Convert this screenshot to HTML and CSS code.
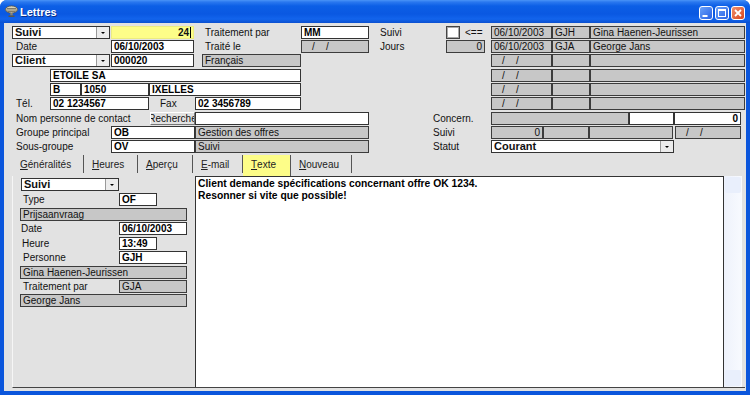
FILE: index.html
```html
<!DOCTYPE html>
<html lang="fr">
<head>
  <meta charset="UTF-8">
  <title>Lettres</title>
  <link rel="stylesheet" href="styles.css">
</head>
<body>
<div class="window">
  <!-- Barre de titre -->
  <div class="titlebar">
    <svg class="app-icon" width="13" height="13" viewBox="0 0 13 13">
      <ellipse cx="6.5" cy="4.5" rx="6" ry="3.6" fill="#d8d2b8" stroke="#5a5648" stroke-width="0.8"/>
      <path d="M2 3.5h9M1.2 5h10.6M2.4 6.5h8.2" stroke="#5a5648" stroke-width="0.7"/>
      <path d="M5.3 8h2.4v2.5H5.3z" fill="#8c8670"/>
      <path d="M3.5 10.5h6v1.5h-6z" fill="#5a5648"/>
    </svg>
    <span class="title">Lettres</span>
    <div class="win-buttons">
      <span class="wbtn"><svg width="12" height="12" viewBox="0 0 12 12"><rect x="2.5" y="8" width="5" height="2" fill="#fff"/></svg></span>
      <span class="wbtn"><svg width="12" height="12" viewBox="0 0 12 12"><rect x="2.5" y="2.5" width="7" height="7" fill="none" stroke="#fff" stroke-width="1"/><rect x="2" y="2" width="8" height="2" fill="#fff"/></svg></span>
      <span class="wbtn close"><svg width="12" height="12" viewBox="0 0 12 12"><path d="M3 3l6 6M9 3l-6 6" stroke="#fff" stroke-width="1.8"/></svg></span>
    </div>
  </div>

  <div class="frame">
    <!-- Entête du document -->
    <div class="head">
      <div class="row">
        <div class="combo w98"><span class="txt">Suivi</span><span class="drop"></span></div>
        <div class="f fy w83 r ml1">24<span class="caret"></span></div>
        <div class="lbl w107 pl11">Traitement par</div>
        <div class="f fw w68">MM</div>
        <div class="lbl w77 pl11">Suivi</div>
        <div class="w15"><span class="chk"></span></div>
        <div class="lbl w30 pl4">&lt;==</div>
        <div class="f fg w61">06/10/2003</div>
        <div class="f fg w38">GJH</div>
        <div class="f fg w155">Gina Haenen-Jeurissen</div>
      </div>
      <div class="row">
        <div class="lbl w99 pl4">Date</div>
        <div class="f fw w83">06/10/2003</div>
        <div class="lbl w107 pl11">Traité le</div>
        <div class="f fg w68 dt">/&nbsp;&nbsp;&nbsp;&nbsp;/</div>
        <div class="lbl w77 pl11">Jours</div>
        <div class="f fg w39 r">0</div>
        <div class="w6"></div>
        <div class="f fg w61">06/10/2003</div>
        <div class="f fg w38">GJA</div>
        <div class="f fg w155">George Jans</div>
      </div>
      <div class="row h15">
        <div class="combo w98"><span class="txt">Client</span><span class="drop"></span></div>
        <div class="f fw w83 ml1">000020</div>
        <div class="w8"></div>
        <div class="f fg w99">Français</div>
        <div class="w190"></div>
        <div class="f fg w61 dt">/&nbsp;&nbsp;&nbsp;&nbsp;/</div>
        <div class="f fg w38"></div>
        <div class="f fg w155"></div>
      </div>
      <div class="row">
        <div class="w38"></div>
        <div class="f fw w251">ETOILE SA</div>
        <div class="w190"></div>
        <div class="f fg w61 dt">/&nbsp;&nbsp;&nbsp;&nbsp;/</div>
        <div class="f fg w38"></div>
        <div class="f fg w155"></div>
      </div>
      <div class="row">
        <div class="w38"></div>
        <div class="f fw w31">B</div>
        <div class="f fw w68">1050</div>
        <div class="f fw w152">IXELLES</div>
        <div class="w190"></div>
        <div class="f fg w61 dt">/&nbsp;&nbsp;&nbsp;&nbsp;/</div>
        <div class="f fg w38"></div>
        <div class="f fg w155"></div>
      </div>
      <div class="row h15">
        <div class="lbl w38 pl4">Tél.</div>
        <div class="f fw w99">02 1234567</div>
        <div class="lbl w46 pl11">Fax</div>
        <div class="f fw w106">02 3456789</div>
        <div class="w190"></div>
        <div class="f fg w61 dt">/&nbsp;&nbsp;&nbsp;&nbsp;/</div>
        <div class="f fg w38"></div>
        <div class="f fg w155"></div>
      </div>
      <div class="row">
        <div class="lbl w138 pl4">Nom personne de contact</div>
        <div class="button w45">Recherche</div>
        <div class="f fw w174"></div>
        <div class="lbl w122 pl64">Concern.</div>
        <div class="f fg w138"></div>
        <div class="f fw w45"></div>
        <div class="f fw w67 r">0</div>
      </div>
      <div class="row">
        <div class="lbl w99 pl4">Groupe principal</div>
        <div class="f fw w84">OB</div>
        <div class="f fg w174">Gestion des offres</div>
        <div class="lbl w122 pl64">Suivi</div>
        <div class="f fg w52 r">0</div>
        <div class="f fg w46"></div>
        <div class="f fg w84"></div>
        <div class="f fg w66 ml2 dt">/&nbsp;&nbsp;&nbsp;&nbsp;/</div>
      </div>
      <div class="row">
        <div class="lbl w99 pl4">Sous-groupe</div>
        <div class="f fw w84">OV</div>
        <div class="f fg w174">Suivi</div>
        <div class="lbl w122 pl64">Statut</div>
        <div class="combo w183"><span class="txt">Courant</span><span class="drop"></span></div>
      </div>
    </div>

    <!-- Onglets -->
    <div class="tabs">
      <div class="tab w72"><u>G</u>énéralités</div>
      <div class="tab w54"><u>H</u>eures</div>
      <div class="tab w55"><u>A</u>perçu</div>
      <div class="tab w50"><u>E</u>-mail</div>
      <div class="tab active w48"><u>T</u>exte</div>
      <div class="tab w61"><u>N</u>ouveau</div>
    </div>

    <div class="lower">
      <div class="side">
        <div class="row h15"><div class="combo w98 ml1"><span class="txt">Suivi</span><span class="drop"></span></div></div>
        <div class="row h15"><div class="lbl w99 pl3">Type</div><div class="f fw w38">OF</div></div>
        <div class="row"><div class="f fg w167">Prijsaanvraag</div></div>
        <div class="row h15"><div class="lbl w99 pl1">Date</div><div class="f fw w68">06/10/2003</div></div>
        <div class="row"><div class="lbl w99 pl2">Heure</div><div class="f fw w38">13:49</div></div>
        <div class="row h15"><div class="lbl w99 pl3">Personne</div><div class="f fw w68">GJH</div></div>
        <div class="row"><div class="f fg w167">Gina Haenen-Jeurissen</div></div>
        <div class="row"><div class="lbl w99 pl3">Traitement par</div><div class="f fg w68">GJA</div></div>
        <div class="row"><div class="f fg w167">George Jans</div></div>
      </div>
      <div class="memo">
        <p>Client demande spécifications concernant offre OK 1234.</p>
        <p>Resonner si vite que possible!</p>
      </div>
      <div class="scroll">
        <span class="sbtn"></span>
        <span class="sbtn"></span>
      </div>
    </div>
  </div>
</div>
</body>
</html>
```

FILE: styles.css
```css
body {
  margin: 0;
  background: #ffffff;
  font-family: "Liberation Sans", Arial, sans-serif;
  font-size: 10px;
  color: #111;
}
.window {
  width: 750px;
  height: 395px;
  background: #0b56dc;
  border-radius: 7px 7px 0 0;
  display: flex;
  flex-direction: column;
  overflow: hidden;
}
.titlebar {
  height: 23px;
  flex: none;
  display: flex;
  align-items: center;
  padding: 0 5px;
  background: linear-gradient(#4a94f7 0, #2a78ef 2px, #0c5fe6 6px, #0a58e2 14px, #1264ec 19px, #0b50d0 23px);
}
.app-icon {
  margin-right: 2px;
}
.title {
  color: #fff;
  font-weight: bold;
  font-size: 11px;
  text-shadow: 1px 1px #0a2f8c;
}
.win-buttons {
  margin-left: auto;
  margin-top: 3px;
  display: flex;
  gap: 2px;
}
.wbtn {
  width: 14px;
  height: 14px;
  box-sizing: border-box;
  border: 1px solid #fff;
  border-radius: 3px;
  background: linear-gradient(135deg, #6aa2fa, #2660e4);
  display: flex;
  align-items: center;
  justify-content: center;
}
.wbtn.close {
  background: linear-gradient(135deg, #f0916e, #d8441c);
}
.frame {
  flex: 1;
  margin: 0 4px 4px;
  background: #e2e2e2;
  padding: 3px 1px 3px 8px;
  display: flex;
  flex-direction: column;
}

/* lignes de champs */
.row {
  display: flex;
  align-items: flex-start;
  height: 14px;
  flex: none;
}
.row.h15 { height: 15px; }
.f {
  height: 13px;
  box-sizing: border-box;
  border: 1px solid #333;
  display: flex;
  align-items: center;
  padding: 0 2px;
  overflow: hidden;
  white-space: nowrap;
  line-height: 11px;
  flex: none;
}
.fw { background: #fff; font-weight: bold; color: #000; }
.fg { background: #c7c7c7; border-color: #3c3c3c; }
.fy { background: #fdfd88; border-color: #ecec80; font-weight: bold; }
.r { justify-content: flex-end; }
.dt { padding-left: 10px; }
.caret {
  width: 1px;
  height: 11px;
  background: #000;
  margin-left: 1px;
}
.lbl {
  height: 13px;
  display: flex;
  align-items: center;
  white-space: nowrap;
  box-sizing: border-box;
  flex: none;
}
.combo {
  height: 13px;
  box-sizing: border-box;
  border: 1px solid #333;
  background: #fff;
  display: flex;
  font-weight: bold;
  font-size: 11px;
  flex: none;
}
.combo .txt {
  flex: 1;
  padding-left: 2px;
  line-height: 11px;
}
.combo .drop {
  width: 12px;
  border-left: 1px solid #999;
  background: #ececec;
  display: flex;
  align-items: center;
  justify-content: center;
}
.combo .drop::after {
  content: "";
  border-left: 2px solid transparent;
  border-right: 2px solid transparent;
  border-top: 2px solid #000;
}
.chk {
  display: block;
  width: 14px;
  height: 13px;
  box-sizing: border-box;
  border: 1px solid #444;
  background: #fff;
  box-shadow: inset 0 0 0 1px #a8a8a8;
}
.button {
  height: 13px;
  box-sizing: border-box;
  border: 1px solid;
  border-color: #fff #777 #777 #fff;
  background: #e2e2e2;
  display: flex;
  align-items: center;
  justify-content: center;
  overflow: hidden;
  white-space: nowrap;
  flex: none;
}

/* onglets */
.tabs {
  display: flex;
  align-items: flex-start;
  height: 21px;
  margin-top: 1px;
  flex: none;
}
.tab {
  height: 18px;
  box-sizing: border-box;
  border-right: 1px solid #555;
  display: flex;
  align-items: center;
  padding-left: 8px;
  white-space: nowrap;
  color: #222;
}
.tab.active {
  height: 21px;
  background: #fdfd88;
  padding-bottom: 3px;
}

/* zone inférieure */
.lower {
  flex: 1;
  display: flex;
  border-bottom: 1px solid #444;
  border-left: 1px solid #f6f6f6;
}
.side {
  width: 182px;
  padding: 2px 0 0 7px;
  box-sizing: border-box;
}
.memo {
  width: 529px;
  background: #fff;
  border: 1px solid #333;
  border-bottom: none;
  box-sizing: border-box;
  padding: 1px 2px;
  font-weight: bold;
  font-size: 10.3px;
  color: #000;
}
.memo p {
  margin: 0;
  line-height: 12px;
}
.scroll {
  width: 18px;
  background: linear-gradient(to right, #eef2fb, #f8faff);
  display: flex;
  flex-direction: column;
  justify-content: space-between;
}
.sbtn {
  height: 16px;
  margin: 1px;
  border-radius: 2px;
  background: #e9effc;
}

.ml1 { margin-left: 1px; }
.ml2 { margin-left: 2px; }
.pl1 { padding-left: 1px; }
.pl2 { padding-left: 2px; }
.pl3 { padding-left: 3px; }
.pl4 { padding-left: 4px; }
.pl11 { padding-left: 11px; }
.pl64 { padding-left: 64px; }
.w6 { width: 6px; flex: none; }
.w8 { width: 8px; flex: none; }
.w15 { width: 15px; flex: none; }
.w30 { width: 30px; }
.w31 { width: 31px; }
.w38 { width: 38px; flex: none; }
.w39 { width: 39px; }
.w45 { width: 45px; }
.w46 { width: 46px; }
.w48 { width: 48px; }
.w50 { width: 50px; }
.w52 { width: 52px; }
.w54 { width: 54px; }
.w55 { width: 55px; }
.w61 { width: 61px; }
.w66 { width: 66px; }
.w67 { width: 67px; }
.w68 { width: 68px; }
.w72 { width: 72px; }
.w77 { width: 77px; }
.w83 { width: 83px; }
.w84 { width: 84px; }
.w98 { width: 98px; }
.w99 { width: 99px; }
.w106 { width: 106px; }
.w107 { width: 107px; }
.w122 { width: 122px; }
.w138 { width: 138px; }
.w152 { width: 152px; }
.w155 { width: 155px; }
.w167 { width: 167px; }
.w174 { width: 174px; }
.w183 { width: 183px; }
.w190 { width: 190px; flex: none; }
.w251 { width: 251px; }
```
